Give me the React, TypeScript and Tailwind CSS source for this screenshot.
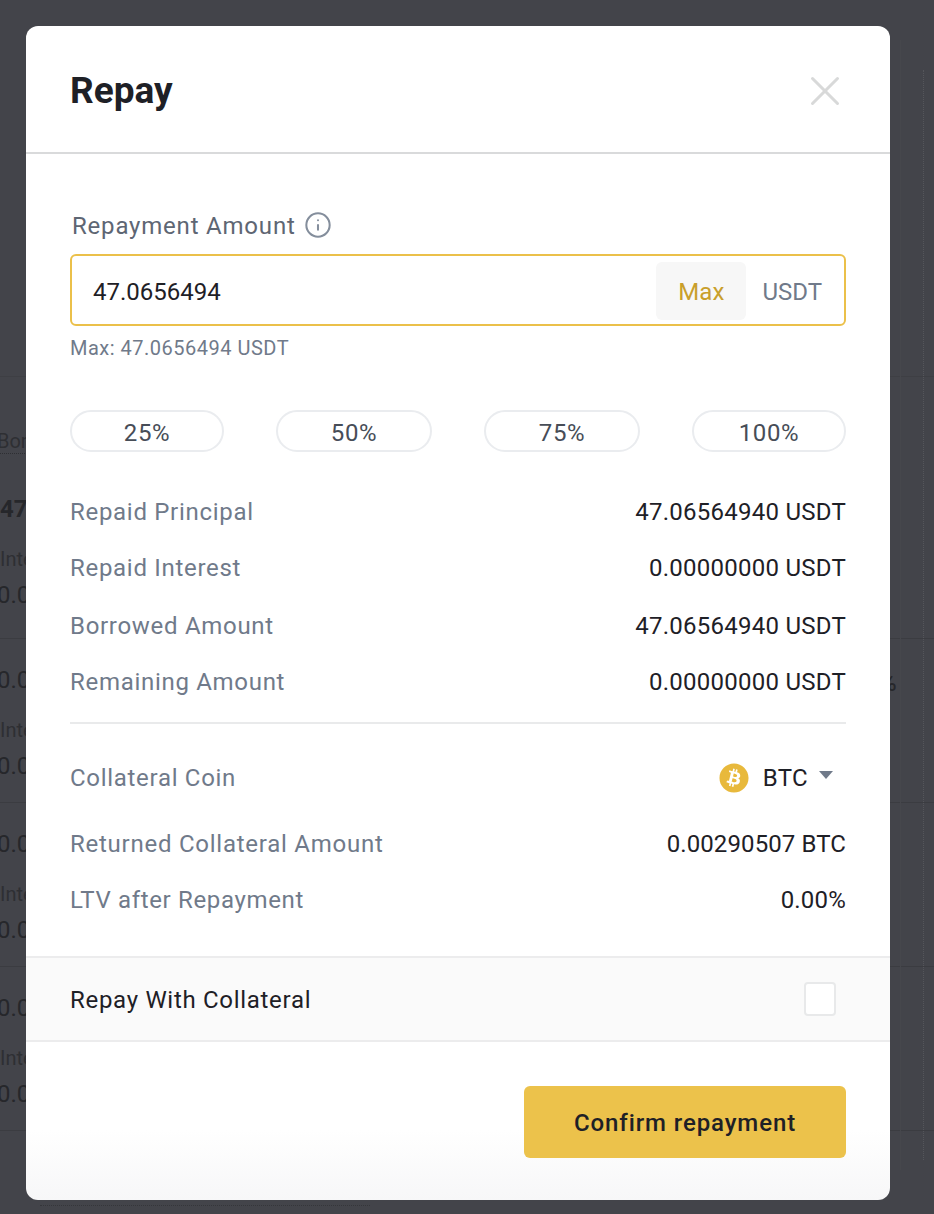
import React from 'react';
import { Info, X } from 'lucide-react';
import { FaBitcoin } from 'react-icons/fa';

const percents = [
  { label: '25%', width: 'w-[154px]' },
  { label: '50%', width: 'w-[156px]' },
  { label: '75%', width: 'w-[156px]' },
  { label: '100%', width: 'w-[154px]' },
];

const amounts = [
  { label: 'Repaid Principal', value: '47.06564940 USDT', height: 'h-[54px]' },
  { label: 'Repaid Interest', value: '0.00000000 USDT', height: 'h-[58px]' },
  { label: 'Borrowed Amount', value: '47.06564940 USDT', height: 'h-[58px]' },
  { label: 'Remaining Amount', value: '0.00000000 USDT', height: 'h-[54px]' },
];

function BackgroundRow({ first, second }: { first: string; second: string }) {
  return (
    <div className="h-[164px] border-b border-[#3b3c41] pt-[26px] text-[24px] leading-[30px] text-[#26272b]">
      <div className="ml-[-3px]">{first}</div>
      <div className="mt-[20px] text-[20px] text-[#2e2f33]">Interest</div>
      <div className="mt-[6px] ml-[-3px]">{second}</div>
    </div>
  );
}

export default function App() {
  return (
    <div className="relative h-[1214px] w-[934px] overflow-hidden bg-[#43444a] font-['Roboto',sans-serif]">
      {/* dimmed page behind the modal */}
      <div className="pt-[376px]">
        <div className="h-[94px] border-t border-[#3e3f44] pt-[52px]">
          <span className="ml-[-3px] border-b border-dotted border-[#2e2f33] text-[20px] leading-[24px] text-[#2e2f33]">Borrowed</span>
        </div>
        <div className="h-[169px] border-b border-[#3b3c41] pt-[24px] text-[24px] leading-[30px] font-bold text-[#26272b]">
          <div>47.06</div>
          <div className="mt-[20px] text-[20px] font-normal text-[#2e2f33]">Interest</div>
          <div className="mt-[6px] ml-[-3px] font-normal">0.00</div>
        </div>
        <BackgroundRow first="0.00" second="0.00" />
        <BackgroundRow first="0.00" second="0.00" />
        <BackgroundRow first="0.00" second="0.00" />
      </div>

      <span className="absolute top-[665px] left-[879px] text-[24px] font-medium text-[#26272b]">%</span>
      <div className="absolute top-[70px] left-[923px] h-[1090px] border-l border-dotted border-[#55565b]" />
      <div className="absolute top-[40px] left-[900px] h-[1130px] border-l border-[#46474c]" />
      <div className="absolute top-[1205px] left-[40px] w-[330px] border-t border-dotted border-[#35363a]" />

      {/* modal */}
      <div className="absolute top-[26px] left-[26px] flex h-[1174px] w-[864px] flex-col overflow-hidden rounded-[12px] bg-gradient-to-b from-white from-[94%] to-[#f7f7f8]">
        <div className="flex h-[128px] shrink-0 items-center justify-between border-b-2 border-[#d9dadb] pr-[40px] pl-[44px]">
          <h1 className="mt-[2px] text-[37px] leading-none font-bold text-[#1e2026]">Repay</h1>
          <X className="mt-[4px] h-[50px] w-[50px] text-[#d8d9d9]" strokeWidth={1.45} />
        </div>

        <div className="flex flex-1 flex-col px-[44px] pt-[57px]">
          <div className="flex h-[30px] items-center gap-[8px] pl-[2px] text-[24px] tracking-[0.8px] text-[#5e6673]">
            Repayment Amount
            <Info className="mb-[2px] h-[28px] w-[28px] text-[#848e9c]" strokeWidth={1.75} />
          </div>
          <div className="mt-[13px] flex h-[72px] items-center rounded-[6px] border-2 border-[#ebc04a] pr-[22px] pl-[21px] text-[24px]">
            <span className="flex-1 pt-[3px] text-[#1e2026]">47.0656494</span>
            <span className="mt-[2px] flex h-[58px] w-[90px] items-center justify-center rounded-[6px] bg-[#f7f7f7] pt-[2px] tracking-[0.2px] text-[#c99f2b]">Max</span>
            <span className="ml-[16px] pt-[3px] text-[#707a8a]">USDT</span>
          </div>
          <div className="mt-[9px] text-[20px] leading-[26px] tracking-[0.5px] text-[#707a8a]">Max: 47.0656494 USDT</div>

          <div className="mt-[49px] flex justify-between">
            {percents.map((p) => (
              <div key={p.label} className={`${p.width} flex h-[42px] items-center justify-center rounded-full border-2 border-[#eaecef] pt-[4px] text-[24px] tracking-[0.6px] text-[#474d57]`}>
                {p.label}
              </div>
            ))}
          </div>

          <div className="mt-[33px] border-b-2 border-[#e9eaeb] pb-[13px]">
            {amounts.map((row) => (
              <div key={row.label} className={`${row.height} flex items-center justify-between text-[24px]`}>
                <span className="tracking-[0.7px] text-[#707a8a]">{row.label}</span>
                <span className="tracking-[0.25px] text-[#1e2026]">{row.value}</span>
              </div>
            ))}
          </div>

          <div className="mt-[24px] flex h-[60px] items-center justify-between text-[24px]">
            <span className="tracking-[0.7px] text-[#707a8a]">Collateral Coin</span>
            <span className="flex items-center pr-[13px] text-[#1e2026]">
              <FaBitcoin className="h-[30px] w-[30px] text-[#e8b93c]" />
              <span className="ml-[14px] tracking-[0.3px]">BTC</span>
              <span className="mb-[6px] ml-[11px] h-0 w-0 border-x-[7px] border-t-[8px] border-x-transparent border-t-[#707a8a]" />
            </span>
          </div>
          <div className="mt-[8px] flex h-[56px] items-center justify-between text-[24px]">
            <span className="tracking-[0.75px] text-[#707a8a]">Returned Collateral Amount</span>
            <span className="tracking-[0.1px] text-[#1e2026]">0.00290507 BTC</span>
          </div>
          <div className="flex h-[56px] items-center justify-between text-[24px]">
            <span className="tracking-[0.65px] text-[#707a8a]">LTV after Repayment</span>
            <span className="tracking-[0.2px] text-[#1e2026]">0.00%</span>
          </div>
        </div>

        <div className="flex h-[86px] shrink-0 items-center justify-between border-y-2 border-[#ececed] bg-[#fafafa] pr-[54px] pl-[44px] text-[24px] text-[#1e2026]">
          <span className="pt-[2px] tracking-[0.7px]">Repay With Collateral</span>
          <span className="h-[34px] w-[32px] rounded-[4px] border-2 border-[#e8e9ea] bg-white" />
        </div>

        <div className="flex h-[158px] shrink-0 justify-end pt-[44px] pr-[44px]">
          <button className="h-[72px] w-[322px] rounded-[6px] bg-[#ecc24b] pt-[2px] text-[24px] font-medium tracking-[0.9px] text-[#1e2026]">Confirm repayment</button>
        </div>
      </div>
    </div>
  );
}
